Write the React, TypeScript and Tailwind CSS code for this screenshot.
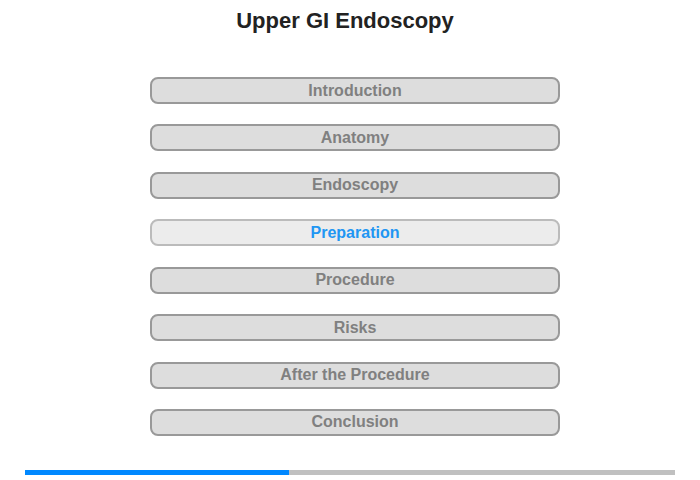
const sections = [
  "Introduction",
  "Anatomy",
  "Endoscopy",
  "Preparation",
  "Procedure",
  "Risks",
  "After the Procedure",
  "Conclusion",
]

const current = "Preparation"

export default function App() {
  return (
    <div className="w-[700px] h-[480px] bg-white flex flex-col items-center font-['Liberation_Sans',Arial,sans-serif]">
      {/* Title */}
      <h1 className="mt-[8px] mr-[10px] text-[22px] leading-[26px] font-bold text-[#222]">Upper GI Endoscopy</h1>

      {/* Menu */}
      <nav className="mt-[43px] ml-[10px] flex flex-col gap-[20.43px]">
        {sections.map((name) => {
          const active = name === current
          return (
            <button
              key={name}
              className={
                active
                  ? "w-[410px] h-[27px] rounded-[8px] border-2 border-[#bbbbbb] bg-[#ececec] text-[#2196f3] text-[16px] font-bold leading-none flex items-center justify-center"
                  : "w-[410px] h-[27px] rounded-[8px] border-2 border-[#999999] bg-[#dddddd] text-[#808080] text-[16px] font-bold leading-none flex items-center justify-center"
              }
            >
              {name}
            </button>
          )
        })}
      </nav>

      {/* Progress */}
      <div className="mt-[34px] w-[650px] h-[5px] bg-[#c0c0c0] flex">
        <div className="w-[264px] h-full bg-[#0088ff]" />
      </div>
    </div>
  )
}
